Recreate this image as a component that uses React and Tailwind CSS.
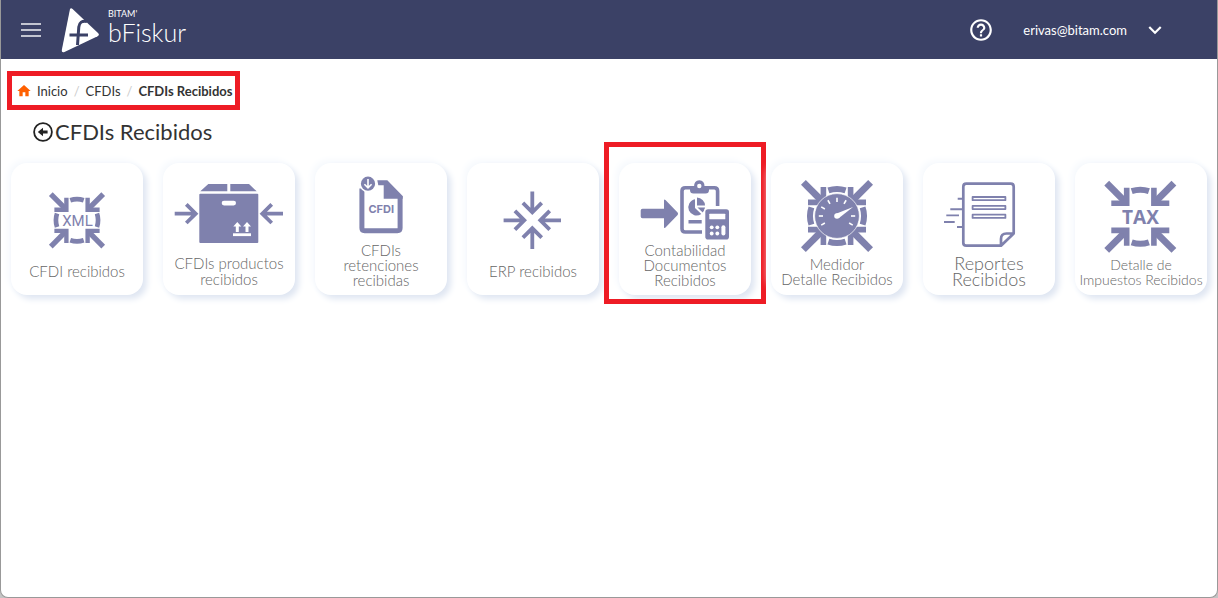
import { MdHelpOutline, MdHome, MdKeyboardArrowDown } from "react-icons/md";

const INK = "#7f81ad";

// four arrows pointing to the centre, drawn around 0,0
function ConvergingArrows({ sides = false }) {
  return (
    <g fill="none" stroke={INK}>
      {[0, 90, 180, 270].map((angle) => (
        <g key={angle} transform={`rotate(${angle})`}>
          <path d="M-33.6 -33.6 L-14 -14" strokeWidth="6.8" />
          <path d="M-29 -13.6 H-13.6 V-29" strokeWidth="5.6" />
          {(sides || angle % 180 === 0) && (
            <path d="M-8.6 -25.6 A27 27 0 0 1 8.6 -25.6" strokeWidth="6" />
          )}
        </g>
      ))}
    </g>
  );
}

function XmlIcon() {
  return (
    <svg viewBox="0 0 132 92" className="h-[92px] w-[132px] shrink-0">
      <g transform="translate(66 57.3) scale(0.78)">
        <ConvergingArrows sides />
      </g>
      <rect x="49.5" y="50" width="34" height="14.5" fill="#fff" />
      <text x="66.5" y="62.8" textAnchor="middle" fill={INK} className="font-[Roboto] text-[15px]">
        XML
      </text>
    </svg>
  );
}

function BoxIcon() {
  return (
    <svg viewBox="0 0 132 92" className="h-[92px] w-[132px] shrink-0">
      <g fill={INK}>
        <rect x="36.3" y="30.7" width="59" height="49.3" rx="1" />
        <path d="M37.3 28.3 L45.3 21 H64.3 V28.3 Z M67.3 21 H86 L93.7 28.3 H67.3 Z" />
      </g>
      <g fill="none" stroke={INK} strokeWidth="3.8">
        <path d="M11.7 50.7 H32 M23.3 41.3 L32.7 50.7 L23.3 60" />
        <path d="M120 50.7 H100 M108.7 41.3 L99.3 50.7 L108.7 60" />
      </g>
      <rect x="58.7" y="37.7" width="14.3" height="4.7" rx="2.3" fill="#fff" />
      <rect x="70" y="70.3" width="18" height="2.8" fill="#fff" />
      <path
        d="M74.3 59 L78.3 63.6 H75.8 V69 H72.8 V63.6 H70.3 Z M84 59 L88 63.6 H85.5 V69 H82.5 V63.6 H80 Z"
        fill="#fff"
      />
    </svg>
  );
}

function CfdiFileIcon() {
  return (
    <svg viewBox="0 0 132 80" className="h-20 w-[132px] shrink-0">
      <path
        d="M46.9 25.5 V65 Q46.9 67.7 49.6 67.7 H82.4 Q85.1 67.7 85.1 65 V33"
        fill="none"
        stroke={INK}
        strokeWidth="5"
      />
      <path d="M62.3 17.3 H72.3 L87.7 33 V35.7 H68.7 V22.3 H63.3 Z" fill={INK} />
      <circle cx="53" cy="20.7" r="8.6" fill="#fff" />
      <circle cx="53" cy="20.7" r="7.1" fill={INK} />
      <path d="M53 16 V24.5 M49.4 21.3 L53 24.9 L56.6 21.3" fill="none" stroke="#fff" strokeWidth="1.6" />
      <text x="66.3" y="49.5" textAnchor="middle" fill={INK} className="font-[Inter] text-[11px] font-bold">
        CFDI
      </text>
    </svg>
  );
}

function ErpIcon() {
  return (
    <svg viewBox="0 0 132 92" className="h-[92px] w-[132px] shrink-0">
      <g transform="translate(65.3 57.3)" fill="none" stroke={INK} strokeWidth="3.8">
        {[0, 90, 180, 270].map((angle) => (
          <path
            key={angle}
            transform={`rotate(${angle})`}
            d="M0 -28.7 V-9 M-9.4 -17.4 L0 -8 L9.4 -17.4"
          />
        ))}
      </g>
    </svg>
  );
}

function AccountingIcon() {
  return (
    <svg viewBox="0 0 132 80" className="h-20 w-[132px] shrink-0">
      <path
        d="M23.5 45.7 H45 V37.5 Q45 35.6 46.5 37 L58.6 49.5 Q59.6 50.7 58.6 51.9 L46.5 64.4 Q45 65.8 45 63.9 V55.3 H23.5 Q21.7 55.3 21.7 53.5 V47.5 Q21.7 45.7 23.5 45.7 Z"
        fill={INK}
      />
      <path
        d="M98.6 43 V28 Q98.6 24.7 95.3 24.7 H66.3 Q63 24.7 63 28 V65.7 Q63 69 66.3 69 H83 M69.5 58.7 H82.7"
        fill="none"
        stroke={INK}
        strokeWidth="3.6"
      />
      <path d="M71 24 H75 Q75 17.3 80.3 17.3 Q85.6 17.3 85.6 24 H90 V27 Q90 30.5 86.5 30.5 H74.5 Q71 30.5 71 27 Z" fill={INK} />
      <circle cx="80.3" cy="23" r="2.2" fill="#fff" />
      <path d="M76 36.3 V45 L82.3 51 A8.2 8.2 0 1 1 76 36.3 Z" fill={INK} />
      <path d="M78 34.6 A8.2 8.2 0 0 1 86 42.6 H78 Z" fill={INK} />
      <path d="M78.5 44.5 H86 A8.2 8.2 0 0 1 83.7 49.6 Z" fill={INK} />
      <rect x="85" y="44.8" width="26.5" height="33" rx="3.5" fill="#fff" />
      <rect x="86.3" y="46.3" width="23.7" height="30.2" rx="2.8" fill={INK} />
      <g fill="#fff">
        <rect x="90.3" y="50.7" width="16" height="5.6" rx="0.6" />
        <circle cx="92.7" cy="64.3" r="1.9" />
        <circle cx="98.3" cy="64.3" r="1.9" />
        <circle cx="92.7" cy="70.5" r="1.9" />
        <circle cx="98.3" cy="70.5" r="1.9" />
        <rect x="102.4" y="62.3" width="4" height="10.3" rx="2" />
      </g>
    </svg>
  );
}

function GaugeIcon() {
  return (
    <svg viewBox="0 0 132 92" className="h-[92px] w-[132px] shrink-0">
      <g transform="translate(66 53)">
        <ConvergingArrows sides />
        <circle r="22.4" fill={INK} stroke="#fff" strokeWidth="0.7" />
        <g stroke="#fff" strokeWidth="1.6">
          {[-120, -90, -60, -30, 0, 30, 90, 120].map((angle) => (
            <path key={angle} transform={`rotate(${angle})`} d="M0 -18.2 V-14" />
          ))}
        </g>
        <path d="M-1.6 -2 L16 -9 L2 2 Z" fill="#fff" />
        <circle r="2.8" fill="#fff" />
      </g>
    </svg>
  );
}

function ReportIcon() {
  return (
    <svg viewBox="0 0 132 92" className="h-[92px] w-[132px] shrink-0">
      <g fill="none" stroke={INK}>
        <path
          d="M78 82.7 H43.3 Q40.3 82.7 40.3 79.7 V23.7 Q40.3 20.7 43.3 20.7 H87.7 Q90.7 20.7 90.7 23.7 V70.5 Z V76 Q78 70.5 83.5 70.5 H90.7"
          strokeWidth="2.7"
          strokeLinejoin="round"
        />
        <path
          d="M49.6 34 H82.4 V37.2 H49.6 Z M49.6 42.9 H82.4 V46.1 H49.6 Z M49.6 51.7 H82.4 V54.9 H49.6 Z"
          strokeWidth="1.8"
          strokeLinejoin="round"
        />
        <path d="M34.7 35.7 H39 M27.3 46.3 H39 M23.3 52.4 H36 M21 59 H31.7 M34 64 H39" strokeWidth="1.9" />
      </g>
    </svg>
  );
}

function TaxIcon() {
  return (
    <svg viewBox="0 0 132 92" className="h-[92px] w-[132px] shrink-0">
      <g transform="translate(65.3 53.8)">
        <ConvergingArrows />
      </g>
      <text x="65.5" y="61.3" textAnchor="middle" fill={INK} className="font-['Open_Sans'] text-[19px] font-bold">
        TAX
      </text>
    </svg>
  );
}

const oneLine = "pb-4 text-[15px] leading-4";
const twoLines = "pb-2 text-[15px] leading-4";
const compact = "pb-2 text-[15px] leading-[15px]";

const cards = [
  { icon: XmlIcon, label: "CFDI recibidos", text: oneLine },
  { icon: BoxIcon, label: "CFDIs productos\nrecibidos", text: twoLines },
  { icon: CfdiFileIcon, label: "CFDIs\nretenciones\nrecibidas", text: compact },
  { icon: ErpIcon, label: "ERP recibidos", text: oneLine },
  { icon: AccountingIcon, label: "Contabilidad\nDocumentos\nRecibidos", text: compact, marked: true },
  { icon: GaugeIcon, label: "Medidor\nDetalle Recibidos", text: compact },
  { icon: ReportIcon, label: "Reportes\nRecibidos", text: "pb-2 text-[18px] leading-4" },
  { icon: TaxIcon, label: "Detalle de\nImpuestos Recibidos", text: "pb-2 text-[14px] leading-[15px]" },
];

function Card({ icon: Icon, label, text, marked }) {
  return (
    <div className="relative">
      <a
        href="#"
        className="mx-auto flex h-[132px] w-[132px] flex-col items-center justify-between rounded-2xl bg-white shadow-[4px_4px_6px_#dfe6f2,-3px_-3px_7px_#f6f9fd]"
      >
        <Icon />
        <span className={`text-center font-light whitespace-pre text-[#666] ${text}`}>{label}</span>
      </a>
      {marked && (
        <div className="pointer-events-none absolute -inset-x-[5px] -top-[21px] -bottom-[9px] border-5 border-[#ee1c25]" />
      )}
    </div>
  );
}

function Header() {
  return (
    <header className="flex h-[59px] items-center bg-[#3b4166] pr-[49px] pl-5 text-white">
      <button type="button" aria-label="Menu" className="flex flex-col gap-1">
        <span className="h-0.5 w-5 bg-[#c3c5d1]" />
        <span className="h-0.5 w-5 bg-[#c3c5d1]" />
        <span className="h-0.5 w-5 bg-[#c3c5d1]" />
      </button>
      <a href="#" className="ml-5 flex items-center gap-[7px]">
        <svg viewBox="0 0 40 46" className="h-[46px] w-10">
          <path d="M9 2 Q10 0.6 11.6 2 L37 26 Q39 28 36.6 29.3 L3.5 45 Q0.4 46 0.8 43 Z" fill="#fff" />
          <path
            d="M26 14.5 Q18.5 13 17.8 20 L16.5 38 M8.5 28 H27"
            fill="none"
            stroke="#3b4166"
            strokeWidth="3"
          />
        </svg>
        <span className="flex flex-col pb-1">
          <span className="text-[9px] leading-2">BITAM'</span>
          <span className="text-[25px] leading-7 font-light">bFiskur</span>
        </span>
      </a>
      <button type="button" aria-label="Ayuda" className="ml-auto">
        <MdHelpOutline className="size-[26px]" />
      </button>
      <button type="button" className="ml-[29px] flex items-center gap-[15px] text-[13px] leading-5">
        erivas@bitam.com
        <MdKeyboardArrowDown className="size-[26px]" />
      </button>
    </header>
  );
}

function Breadcrumb() {
  return (
    <nav className="mt-3 ml-[6px] flex h-[39px] w-fit items-center border-5 border-[#ee1c25] pr-[3px] pl-1 text-[13px] leading-5 whitespace-nowrap text-[#333]">
      <MdHome className="mr-[5px] size-4 text-[#ff6000]" />
      <a href="#">Inicio</a>
      <span className="px-[6px] text-[#ccc]">/</span>
      <a href="#">CFDIs</a>
      <span className="px-[6px] text-[#ccc]">/</span>
      <span className="font-bold">CFDIs Recibidos</span>
    </nav>
  );
}

export default function App() {
  return (
    <div className="min-h-screen bg-[#c4c4c4] font-[Lato,sans-serif]">
      <div className="min-h-screen overflow-hidden rounded-b-lg border-x border-b border-[#999] bg-white">
        <Header />
        <Breadcrumb />
        <main>
          <h1 className="mt-2 ml-8 flex items-center gap-0.5 text-[22px] leading-7 text-[#333]">
            <button type="button" aria-label="Regresar">
              <svg viewBox="0 0 20 20" className="size-5">
                <circle cx="10" cy="10" r="8.9" fill="none" stroke="#222" strokeWidth="1.8" />
                <path d="M4.8 10 L10 5.8 V8.6 H14.6 V11.4 H10 V14.2 Z" fill="#222" />
              </svg>
            </button>
            CFDIs Recibidos
          </h1>
          <section className="mt-[17px] grid grid-cols-8">
            {cards.map((card) => (
              <Card key={card.label} {...card} />
            ))}
          </section>
        </main>
      </div>
    </div>
  );
}
